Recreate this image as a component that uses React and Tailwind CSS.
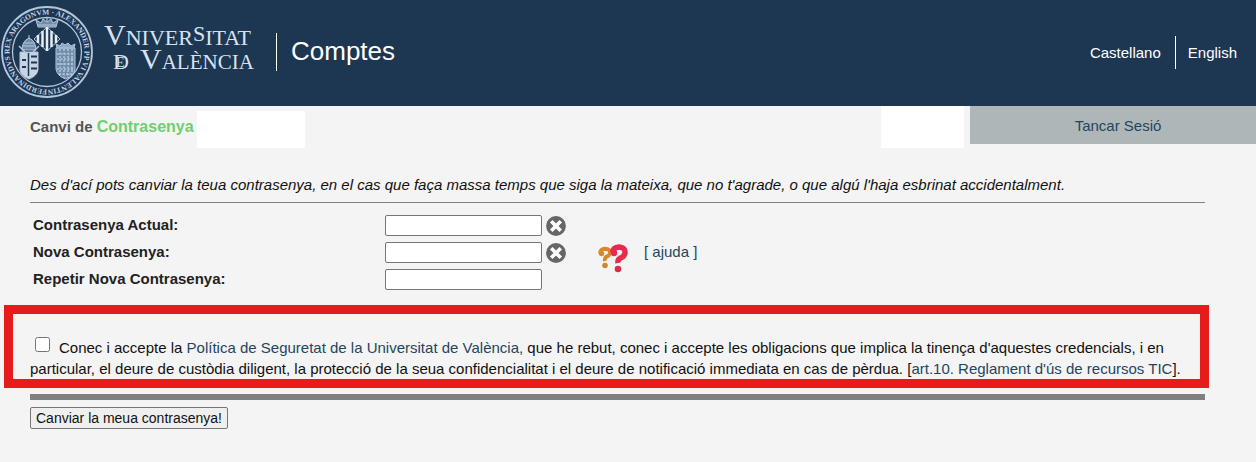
import { useRef } from "react";

function Seal() {
  return (
    <svg viewBox="0 0 94 94" className="h-[94px] w-[94px] shrink-0" fill="none" stroke="#b4c6d9" role="img" aria-label="Segell de la Universitat de València">
      <circle cx="47" cy="47" r="45" strokeWidth="1.8" />
      <circle cx="47" cy="47" r="34.500" strokeWidth="1.300" />
      <defs>
        <path id="seal-ring" d="M47 84.500 A37.500 37.500 0 1 1 47.100 84.500" />
      </defs>
      <text fill="#c6d4e3" stroke="none" fontSize="7.500" fontWeight="700" fontFamily="Liberation Serif, serif">
        <textPath href="#seal-ring">FERDINANDVS REX ARAGONVM · ALEXANDER PP VI VALENTIN</textPath>
      </text>
      {/* crown and central lozenge with bars */}
      <path d="M38 22 L36 15 L41 18 L43 14 L47 17 L51 14 L53 18 L58 15 L56 22 Z" fill="#6f8cab" strokeWidth="1" />
      <path d="M47 12 V16 M38 20 H56" strokeWidth="1.200" />
      <path d="M47 22 L60 34 L47 46 L34 34 Z" strokeWidth="1" />
      <path d="M38 30 V38 M42.500 26 V42 M47 22 V46 M51.500 26 V42 M56 30 V38" stroke="#e6edf5" strokeWidth="2.500" />
      {/* papal shield */}
      <path d="M20 47 H38 V65 Q37 71 29 74 Q21 71 20 65 Z" fill="#c6d4e3" strokeWidth="1" />
      <path d="M28.500 48 V71" stroke="#1d3652" strokeWidth="1.500" />
      <path d="M31 51.500 H37 M31 57.500 H37 M31 63.500 H37 M22 55 H26 M22 62 H26" stroke="#1d3652" strokeWidth="2" />
      <path d="M22 45 Q22 36 29 33 Q36 36 36 45 Z" fill="#6f8cab" strokeWidth="1" />
      <path d="M29 30 V34 M23 41 H35 M24 38 H34" strokeWidth="1" />
      <path d="M19 41 L25 47 M39 41 L33 47" strokeWidth="1.500" />
      {/* royal shield */}
      <path d="M56 43 H75 V64 Q74 71 65.500 74 Q57 71 56 64 Z" fill="#6f8cab" strokeWidth="1" />
      <path d="M60 44 V70 M64 44 V73 M68 44 V73 M72 44 V70 M57 49 H74 M57 54 H74 M57 59 H74 M57 64 H74 M59 69 H72" strokeDasharray="2 1.500" strokeWidth="1.500" />
      <path d="M57 43 L56 39 L60 41 L62 38 L65 40 L68 38 L71 41 L75 39 L74 43 Z" fill="#8fa8c3" strokeWidth="1" />
    </svg>
  );
}

function Wordmark() {
  return (
    <svg viewBox="0 -8 160 80" className="ml-1 -mr-1 h-20 w-[160px] shrink-0" fill="#d8e2ed" fontFamily="Liberation Serif, serif">
      <text x="6" y="25" fontSize="22">
        <tspan fontSize="30">V</tspan>NIVER<tspan dy="-4">S</tspan><tspan dy="4">ITAT</tspan>
      </text>
      <text x="15" y="49" fontSize="22">D</text>
      <text x="18" y="47" fontSize="14">E</text>
      <text x="42" y="49" fontSize="21">
        <tspan fontSize="30">V</tspan>ALÈNCIA
      </text>
    </svg>
  );
}

function ClearIcon() {
  return (
    <svg viewBox="0 0 20 20" className="h-5 w-5">
      <circle cx="10" cy="10" r="9.900" fill="#666" />
      <path d="M6.500 6.500 L13.500 13.500 M13.500 6.500 L6.500 13.500" stroke="#fff" strokeWidth="3.600" strokeLinecap="square" />
    </svg>
  );
}

function HelpIcon() {
  return (
    <svg viewBox="0 0 32 30" className="h-[30px] w-8 shrink-0" fill="none">
      <path d="M4 9.500 Q4.500 5 9 4.800 Q14.500 5 14 9.500 Q13 12 10 13 Q8.500 14.500 9 17" stroke="#dd8828" strokeWidth="4" />
      <circle cx="5.500" cy="9.500" r="2.700" fill="#dd8828" />
      <circle cx="9" cy="21.500" r="2.800" fill="#c98a2c" />
      <path d="M16.500 8.500 Q17 3.500 23 3 Q29.500 3.500 29 9 Q28.500 12.500 24.500 14 Q21.500 15.500 22 19" stroke="#e62c4e" strokeWidth="5.500" />
      <circle cx="18" cy="9" r="3.200" fill="#e62c4e" />
      <circle cx="22" cy="25" r="3.300" fill="#dc2c4a" />
    </svg>
  );
}

function PasswordRow({ id, label, clearable, children }) {
  const input = useRef(null);
  return (
    <div className="flex h-[27px] items-center">
      <label htmlFor={id} className="w-[352px] pb-0.5 pl-[3px] font-bold text-[#222]">{label}</label>
      <span className="flex items-center gap-1 pl-[3px]">
        <input ref={input} id={id} type="password" className="h-[21px] w-[157px] rounded-xs border border-[#767676] bg-white px-1" />
        {clearable && (
          <button type="button" aria-label={"Esborrar " + label} onClick={() => { input.current.value = ""; }}>
            <ClearIcon />
          </button>
        )}
      </span>
      {children}
    </div>
  );
}

export default function App() {
  return (
    <div className="min-h-screen bg-[#f4f4f4] font-['Liberation_Sans',Arial,sans-serif] text-[15px] leading-[21px] text-[#111]">
      <header className="flex h-[106px] items-center bg-[#1d3652] pr-[19px] pb-0.5 text-white">
        <Seal />
        <Wordmark />
        <div className="ml-[22px] h-[38px] w-px bg-white" />
        <h1 className="ml-3.5 pb-0.5 text-[26px] leading-8">Comptes</h1>
        <nav className="ml-auto flex items-center">
          <a href="#ca" className="pr-3.5">Castellano</a>
          <a href="#en" className="border-l border-white py-1.5 pl-3">English</a>
        </nav>
      </header>

      <div className="flex h-[42px] items-start">
        <h2 className="pt-[10px] pl-[30px] font-bold text-[#555]">
          Canvi de <span className="text-base leading-[21px] text-[#6fd06f]">Contrasenya</span>
        </h2>
        <div className="ml-[3px] h-[37px] w-[108px] self-end bg-white" />
        <div className="ml-auto h-[42px] w-[83px] bg-white" />
        <a href="#tancar" className="ml-1.5 flex h-[38px] w-[286px] items-center justify-center bg-[#afb6b8] pl-2.5 text-[#1f4660]">Tancar Sesió</a>
      </div>

      <form className="pb-8" onSubmit={(e) => e.preventDefault()}>
        <p className="mr-[51px] ml-[30px] border-b border-[#808080] pt-[26px] pb-[7px] italic">
          Des d'ací pots canviar la teua contrasenya, en el cas que faça massa temps que siga la mateixa, que no t'agrade, o que algú l'haja esbrinat accidentalment.
        </p>

        <div className="ml-[30px] pt-[9px]">
          <PasswordRow id="actual" label="Contrasenya Actual:" clearable />
          <PasswordRow id="nova" label="Nova Contrasenya:" clearable>
            <div className="ml-[30px] flex items-start gap-4">
              <div className="pt-3">
                <HelpIcon />
              </div>
              <a href="#ajuda" className="self-center pb-0.5 text-[#1f4660]">[ ajuda ]</a>
            </div>
          </PasswordRow>
          <PasswordRow id="repetir" label="Repetir Nova Contrasenya:" />
        </div>

        <div className="mt-3 mr-[47px] ml-1 border-9 border-[#e61c1c] pt-[23px] pr-4 pl-[17px]">
          <input id="accepte" type="checkbox" className="mr-[9px] ml-[5px] h-[15px] w-[15px] align-[1px]" />
          <label htmlFor="accepte">Conec i accepte la </label>
          <a href="#politica" className="text-[#1f4660]">Política de Seguretat de la Universitat de València,</a> que he rebut, conec i accepte les obligacions que implica la tinença d'aquestes credencials, i en particular, el deure de custòdia diligent, la protecció de la seua confidencialitat i el deure de notificació immediata en cas de pèrdua. [<a href="#art10" className="text-[#1f4660]">art.10. Reglament d'ús de recursos TIC</a>].
        </div>

        <div className="mt-1.5 mr-[51px] ml-[30px] h-1.5 bg-[#808080]" />
        <button type="submit" className="mt-[7px] ml-[30px] h-[22px] rounded-xs border border-[#767676] bg-[#efefef] px-[5px] text-sm leading-5">
          Canviar la meua contrasenya!
        </button>
      </form>
    </div>
  );
}
